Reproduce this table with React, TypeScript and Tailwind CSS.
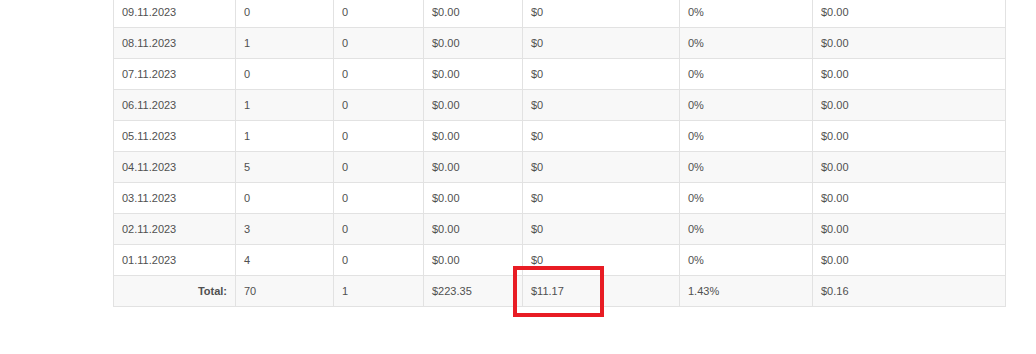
import React from 'react';

const rows = [
  ['09.11.2023', '0', '0', '$0.00', '$0', '0%', '$0.00'],
  ['08.11.2023', '1', '0', '$0.00', '$0', '0%', '$0.00'],
  ['07.11.2023', '0', '0', '$0.00', '$0', '0%', '$0.00'],
  ['06.11.2023', '1', '0', '$0.00', '$0', '0%', '$0.00'],
  ['05.11.2023', '1', '0', '$0.00', '$0', '0%', '$0.00'],
  ['04.11.2023', '5', '0', '$0.00', '$0', '0%', '$0.00'],
  ['03.11.2023', '0', '0', '$0.00', '$0', '0%', '$0.00'],
  ['02.11.2023', '3', '0', '$0.00', '$0', '0%', '$0.00'],
  ['01.11.2023', '4', '0', '$0.00', '$0', '0%', '$0.00'],
];

const widths = ['w-[122px]', 'w-[98px]', 'w-[90px]', 'w-[99px]', 'w-[157px]', 'w-[133px]', 'w-[193px]'];

const cell = 'border border-[#e2e2e2] h-[31px] px-2 py-0 align-middle';

export default function App() {
  return (
    <div className="w-[1036px] h-[354px] bg-white overflow-hidden antialiased font-['Liberation_Sans',Arial,sans-serif] text-[11px] text-[#505050]">
      <div className="relative ml-[113px] mt-[-4px] w-[893px] opacity-[0.999]">
        <table className="w-[893px] table-fixed border-collapse">
          <colgroup>
            {widths.map((w, i) => (
              <col key={i} className={w} />
            ))}
          </colgroup>
          <tbody>
            {rows.map((r, i) => (
              <tr key={i} className={i % 2 === 1 ? 'bg-[#f8f8f8]' : 'bg-white'}>
                {r.map((c, j) => (
                  <td key={j} className={cell}>{c}</td>
                ))}
              </tr>
            ))}
            <tr className="bg-[#f8f8f8]">
              <td className={cell + ' text-right font-bold'}>Total:</td>
              <td className={cell}>70</td>
              <td className={cell}>1</td>
              <td className={cell}>$223.35</td>
              <td className={cell}>$11.17</td>
              <td className={cell}>1.43%</td>
              <td className={cell}>$0.16</td>
            </tr>
          </tbody>
        </table>
        {/* highlight box around the total */}
        <div className="absolute left-[400px] top-[270px] w-[91px] h-[51px] border-4 border-[#e81c24]" />
      </div>
    </div>
  );
}
